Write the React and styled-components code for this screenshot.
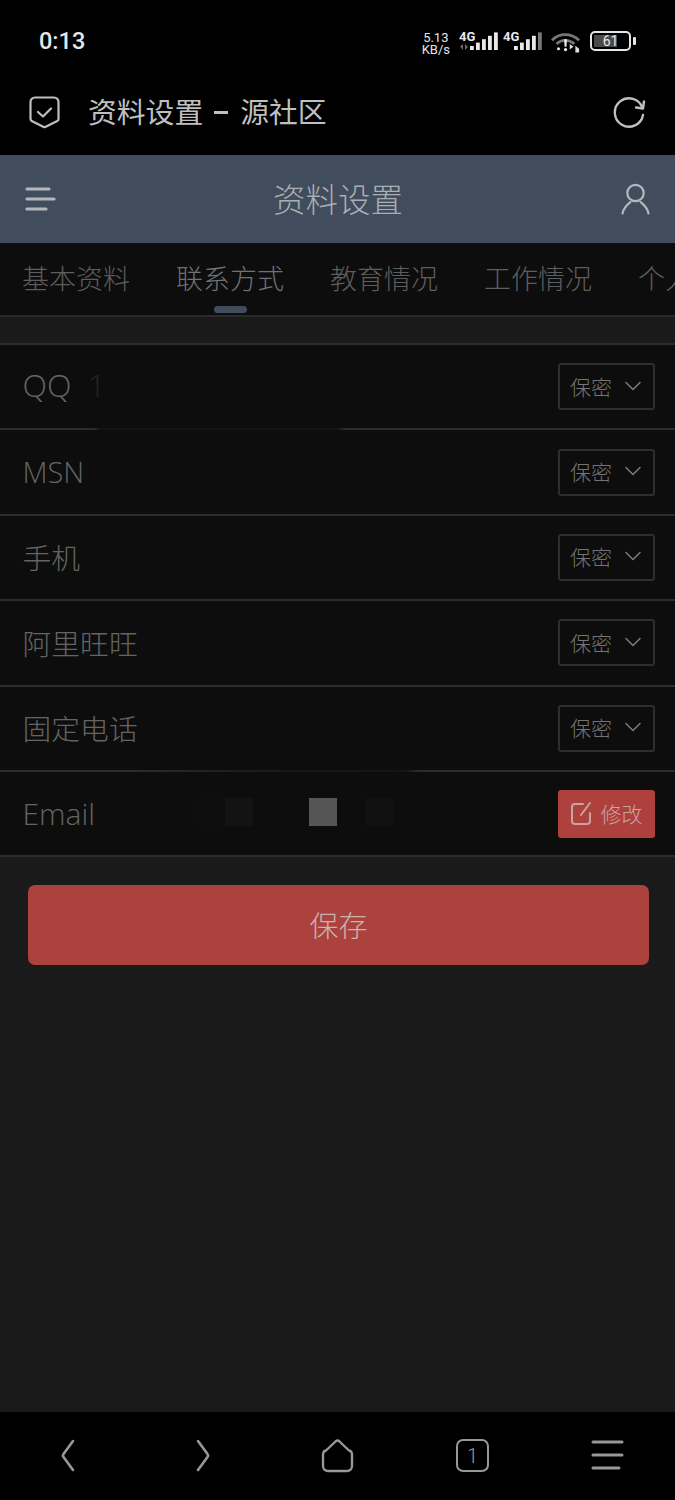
import React from 'react';
import styled, { createGlobalStyle } from 'styled-components';

const GlobalStyle = createGlobalStyle`
  html, body {
    margin: 0;
    padding: 0;
    background: #000;
  }
  * {
    box-sizing: border-box;
  }
`;

const cjk = `"Noto Sans CJK SC", "Noto Sans", sans-serif`;

const Screen = styled.div`
  width: 675px;
  height: 1500px;
  display: flex;
  flex-direction: column;
  overflow: hidden;
  background: #1a1a1a;
  font-family: ${cjk};
`;

const StatusBar = styled.div`
  height: 75px;
  flex: none;
  display: flex;
  align-items: flex-start;
  justify-content: space-between;
  padding: 26px 38px 0 39px;
  background: #000;
`;

const Clock = styled.div`
  font-family: Roboto, sans-serif;
  font-size: 23.5px;
  font-weight: 500;
  line-height: 30px;
  color: #e6e6e6;
`;

const StatusIcons = styled.div`
  display: flex;
  align-items: flex-start;
  gap: 9px;
  padding-top: 5px;
`;

const CellGroup = styled.div`
  display: flex;
  gap: 5px;
`;

const NetSpeed = styled.div`
  font-family: Roboto, sans-serif;
  font-size: 13px;
  line-height: 12px;
  text-align: center;
  color: #e4e4e4;
  padding-top: 1px;
`;

const BrowserBar = styled.div`
  height: 80px;
  flex: none;
  display: flex;
  align-items: center;
  padding: 0 29px 5px;
  background: #000;
  color: #bfbfbf;
`;

const PageTitle = styled.div`
  flex: 1;
  display: flex;
  align-items: center;
  margin-left: 28px;
  margin-top: -3px;
  font-size: 28.8px;
  font-weight: 400;
  line-height: 40px;
`;

const TitleDash = styled.span`
  width: 14px;
  height: 3px;
  margin: 2px 12px 0 11px;
  background: currentColor;
`;

const AppHeader = styled.header`
  height: 88px;
  flex: none;
  display: flex;
  align-items: center;
  justify-content: space-between;
  padding: 0 25px;
  background: #414c5c;
  color: #b4b8bd;
`;

const HeaderTitle = styled.h1`
  margin: -3px 1px 0 0;
  font-size: 32.5px;
  font-weight: 300;
  line-height: 44px;
  color: #a9aeb4;
`;

const Tabs = styled.nav`
  height: 74px;
  flex: none;
  display: flex;
  gap: 46px;
  padding: 14px 0 0 22px;
  overflow: hidden;
  background: #0d0d0d;
  border-bottom: 2px solid #2a2a2a;
`;

const Tab = styled.div`
  position: relative;
  flex: none;
  font-size: 27px;
  font-weight: 300;
  line-height: 41px;
  height: 56px;
  color: ${(p) => (p.$active ? '#6d7178' : '#5e5e5e')};

  &::after {
    content: '';
    display: ${(p) => (p.$active ? 'block' : 'none')};
    position: absolute;
    left: 38px;
    bottom: 0;
    width: 33px;
    height: 7px;
    border-radius: 4px;
    background: #414c5c;
  }
`;

const Gap = styled.div`
  height: 26px;
  flex: none;
  background: #1a1a1a;
`;

const Form = styled.section`
  flex: none;
  background: #0d0d0d;
  border-top: 2px solid #2c2c2c;
`;

const Row = styled.div`
  position: relative;
  height: 85.4px;
  display: flex;
  align-items: center;
  justify-content: space-between;
  padding: 0 20px 0 22.5px;
  border-bottom: 2px solid #2c2c2c;
  ${(p) => p.$fade && `border-image: ${p.$fade} 1;`}
`;

const Label = styled.div`
  font-size: 28.8px;
  font-weight: 300;
  line-height: 40px;
  color: #646464;
`;

const LatinLabel = styled(Label)`
  font-family: "Open Sans", "Noto Sans", sans-serif;
  font-size: ${(p) => p.$size || 29}px;
  font-weight: 300;
  line-height: 40px;
  margin-top: ${(p) => (p.$raised ? '-3px' : '0')};
`;

const FadedDigit = styled.span`
  margin-left: 16px;
  color: #242424;
`;

const Select = styled.div`
  width: 97px;
  height: 47px;
  display: flex;
  align-items: center;
  justify-content: space-between;
  padding: 0 12px 2px 10px;
  border: 2px solid #2e2e2e;
  border-radius: 3px;
  font-size: 21px;
  font-weight: 300;
  color: #747474;
`;

const EditButton = styled.button`
  width: 97px;
  height: 48px;
  display: flex;
  align-items: center;
  justify-content: center;
  gap: 7px;
  padding: 0 0 2px;
  border: 0;
  border-radius: 3px;
  background: #ae413d;
  font-family: ${cjk};
  font-size: 21px;
  font-weight: 300;
  color: #c9a3a1;
`;

const MaskedValue = styled.div`
  position: absolute;
  left: 197px;
  top: 26px;
  display: flex;
`;

const MaskCell = styled.div`
  width: 28px;
  height: 28px;
  background: ${(p) => p.$color};
`;

const SaveButton = styled.button`
  display: block;
  flex: none;
  width: 621px;
  height: 80px;
  margin: 28px 0 0 28px;
  padding: 0 0 3px;
  border: 0;
  border-radius: 7px;
  background: #ab423d;
  font-family: ${cjk};
  font-size: 29px;
  font-weight: 300;
  color: #c9b2b0;
`;

const Spacer = styled.div`
  flex: 1;
`;

const BottomBar = styled.footer`
  height: 88px;
  flex: none;
  display: grid;
  grid-template-columns: repeat(5, 1fr);
  align-items: start;
  justify-items: center;
  padding-top: 27px;
  background: #000;
  color: #989898;
`;

const TabCount = styled.div`
  width: 33px;
  height: 33px;
  display: flex;
  align-items: center;
  justify-content: center;
  border: 2px solid currentColor;
  border-radius: 7px;
  font-family: Roboto, sans-serif;
  font-size: 20px;
  font-weight: 300;
  line-height: 1;
`;

const Speed = () => (
  <NetSpeed>
    5.13
    <br />
    KB/s
  </NetSpeed>
);

// cell bars with the 4G tag above the short ones
const Signal = ({ arrows, last }) => (
  <svg width="39" height="22" viewBox="0 0 39 22" style={{ overflow: 'visible' }}>
    <text x="0" y="10" fill="#e8e8e8" fontFamily="Roboto, sans-serif" fontSize="13" fontWeight="700">4G</text>
    {arrows && <path d="M1 15.5l3-2.500v6zM6 13l3 3-3 3z" fill="#666" />}
    {[0, 1, 2, 3, 4].map((i) => {
      const h = 4 + i * 3.4;
      const x = 11 + i * 6;
      return <rect key={i} x={x} y={19 - h} width="3.8" height={h} fill={i === 4 ? last : '#e8e8e8'} />;
    })}
  </svg>
);

const WifiIcon = () => (
  <svg width="30" height="24" viewBox="0 0 32 24" fill="none">
    <path d="M1 9c8-8 20-8 29 0" stroke="#777" strokeWidth="3" />
    <path d="M6 13c5-5 13-5 19 0" stroke="#777" strokeWidth="3" />
    <path d="M14 8h3l-.5 8h-2z" fill="#eee" />
    <circle cx="15.5" cy="19" r="1.7" fill="#eee" />
    <circle cx="8" cy="18" r="1.6" fill="#eee" />
    <path d="M20 13l4 3-4 3zM26 22v-7l4 3v4z" fill="#ddd" />
  </svg>
);

const BatteryIcon = () => (
  <svg width="47" height="22" viewBox="0 0 47 22" fill="none">
    <rect x="1" y="1" width="39" height="18" rx="4" stroke="#e6e6e6" strokeWidth="2" />
    <rect x="4" y="4" width="23" height="12" fill="#4a4a4a" />
    <text x="20.5" y="15" textAnchor="middle" fill="#e6e6e6" fontFamily="Roboto, sans-serif" fontSize="14">61</text>
    <rect x="43" y="6" width="3" height="8" rx="1" fill="#e6e6e6" />
  </svg>
);

const ShieldIcon = () => (
  <svg width="31" height="33" viewBox="0 0 31 33" fill="none" stroke="currentColor">
    <path d="M6 1.5h19a4.500 4.500 0 0 1 4.500 4.500v17c0 1-.5 1.600-1.200 2l-12 6a2 2 0 0 1-1.600 0l-12-6c-.8-.4-1.200-1-1.200-2V6A4.500 4.500 0 0 1 6 1.500z" strokeWidth="2.2" />
    <path d="M9 16l5 4.500 8-8" strokeWidth="2.2" strokeLinecap="round" strokeLinejoin="round" />
  </svg>
);

const RefreshIcon = () => (
  <svg width="33" height="33" viewBox="0 0 33 33" fill="none" stroke="currentColor" strokeWidth="2.4" strokeLinecap="round" strokeLinejoin="round">
    <path d="M29.5 12A14.200 14.200 0 1 0 30 19" />
    <path d="M23 11.5l7 1 1-7" />
  </svg>
);

const MenuIcon = () => (
  <svg width="31" height="26" viewBox="0 0 31 26" fill="none" stroke="currentColor" strokeWidth="3.2" strokeLinecap="round">
    <path d="M2 3h22M2 13h27M2 23h19" />
  </svg>
);

const UserIcon = () => (
  <svg width="29" height="32" viewBox="0 0 29 32" fill="none" stroke="currentColor" strokeWidth="2.2" strokeLinecap="round">
    <circle cx="14.5" cy="10" r="8.2" />
    <path d="M1.5 30.5c1-6 5-9 8-11.500M27.500 30.5c-1-6-5-9-8-11.500" />
  </svg>
);

const ChevronDown = () => (
  <svg width="16" height="10" viewBox="0 0 16 10" fill="none" stroke="#777" strokeWidth="1.6" strokeLinecap="round" strokeLinejoin="round">
    <path d="M1 1.5l7 7 7-7" />
  </svg>
);

const EditIcon = () => (
  <svg width="23" height="24" viewBox="0 0 23 24" fill="none" stroke="#c9a3a1" strokeWidth="2" strokeLinecap="round" strokeLinejoin="round">
    <path d="M12 3H4a3 3 0 0 0-3 3v14a3 3 0 0 0 3 3h12a3 3 0 0 0 3-3v-8" />
    <path d="M10 14L19 2" />
  </svg>
);

const BackIcon = () => (
  <svg width="16" height="33" viewBox="0 0 16 33" fill="none" stroke="currentColor" strokeWidth="2.6" strokeLinecap="round" strokeLinejoin="round">
    <path d="M13 2L3.500 15a2.500 2.500 0 0 0 0 3L13 31" />
  </svg>
);

const ForwardIcon = () => (
  <svg width="16" height="33" viewBox="0 0 16 33" fill="none" stroke="currentColor" strokeWidth="2.6" strokeLinecap="round" strokeLinejoin="round">
    <path d="M3 2l9.500 13a2.500 2.500 0 0 1 0 3L3 31" />
  </svg>
);

const HomeIcon = () => (
  <svg width="33" height="34" viewBox="0 0 33 34" fill="none" stroke="currentColor" strokeWidth="2.4" strokeLinejoin="round">
    <path d="M14.500 2.500a3 3 0 0 1 4 0l9.500 9a4 4 0 0 1 3 3.500V27a5 5 0 0 1-5 5H7a5 5 0 0 1-5-5V15a4 4 0 0 1 3-3.500z" />
  </svg>
);

const LinesIcon = () => (
  <svg width="33" height="33" viewBox="0 0 33 33" fill="none" stroke="currentColor" strokeWidth="3" strokeLinecap="round">
    <path d="M2 3h29M2 16h29M2 29h26" />
  </svg>
);

const tabs = ['基本资料', '联系方式', '教育情况', '工作情况', '个人信息'];
const rows = ['手机', '阿里旺旺', '固定电话'];

const App = () => (
  <Screen>
    <GlobalStyle />
    <StatusBar>
      <Clock>0:13</Clock>
      <StatusIcons>
        <Speed />
        <CellGroup>
          <Signal arrows last="#e8e8e8" />
          <Signal last="#777" />
        </CellGroup>
        <WifiIcon />
        <BatteryIcon />
      </StatusIcons>
    </StatusBar>
    <BrowserBar>
      <ShieldIcon />
      <PageTitle>
        资料设置
        <TitleDash />
        源社区
      </PageTitle>
      <RefreshIcon />
    </BrowserBar>
    <AppHeader>
      <MenuIcon />
      <HeaderTitle>资料设置</HeaderTitle>
      <UserIcon />
    </AppHeader>
    <Tabs>
      {tabs.map((t, i) => (
        <Tab key={t} $active={i === 1}>{t}</Tab>
      ))}
    </Tabs>
    <Gap />
    <Form>
      <Row $fade="linear-gradient(90deg, #2c2c2c 14%, #141414 15%, #141414 50%, #2c2c2c 51%)">
        <LatinLabel $raised $size={32}>QQ<FadedDigit>1</FadedDigit></LatinLabel>
        <Select>保密<ChevronDown /></Select>
      </Row>
      <Row>
        <LatinLabel>MSN</LatinLabel>
        <Select>保密<ChevronDown /></Select>
      </Row>
      {rows.map((r, i) => (
        <Row
          key={r}
          $fade={i === 2 ? 'linear-gradient(90deg, #2c2c2c 20%, #1a1a1a 40%, #141414 60%, #2c2c2c 62%)' : undefined}
        >
          <Label>{r}</Label>
          <Select>保密<ChevronDown /></Select>
        </Row>
      ))}
      <Row>
        <LatinLabel $size={30}>Email</LatinLabel>
        <MaskedValue>
          <MaskCell $color="#0e0e0e" />
          <MaskCell $color="#131313" />
          <MaskCell $color="#0d0d0d" />
          <MaskCell $color="#0d0d0d" />
          <MaskCell $color="#555555" />
          <MaskCell $color="#0d0d0d" />
          <MaskCell $color="#111111" />
        </MaskedValue>
        <EditButton><EditIcon />修改</EditButton>
      </Row>
    </Form>
    <SaveButton>保存</SaveButton>
    <Spacer />
    <BottomBar>
      <BackIcon />
      <ForwardIcon />
      <HomeIcon />
      <TabCount>1</TabCount>
      <LinesIcon />
    </BottomBar>
  </Screen>
);

export default App;
